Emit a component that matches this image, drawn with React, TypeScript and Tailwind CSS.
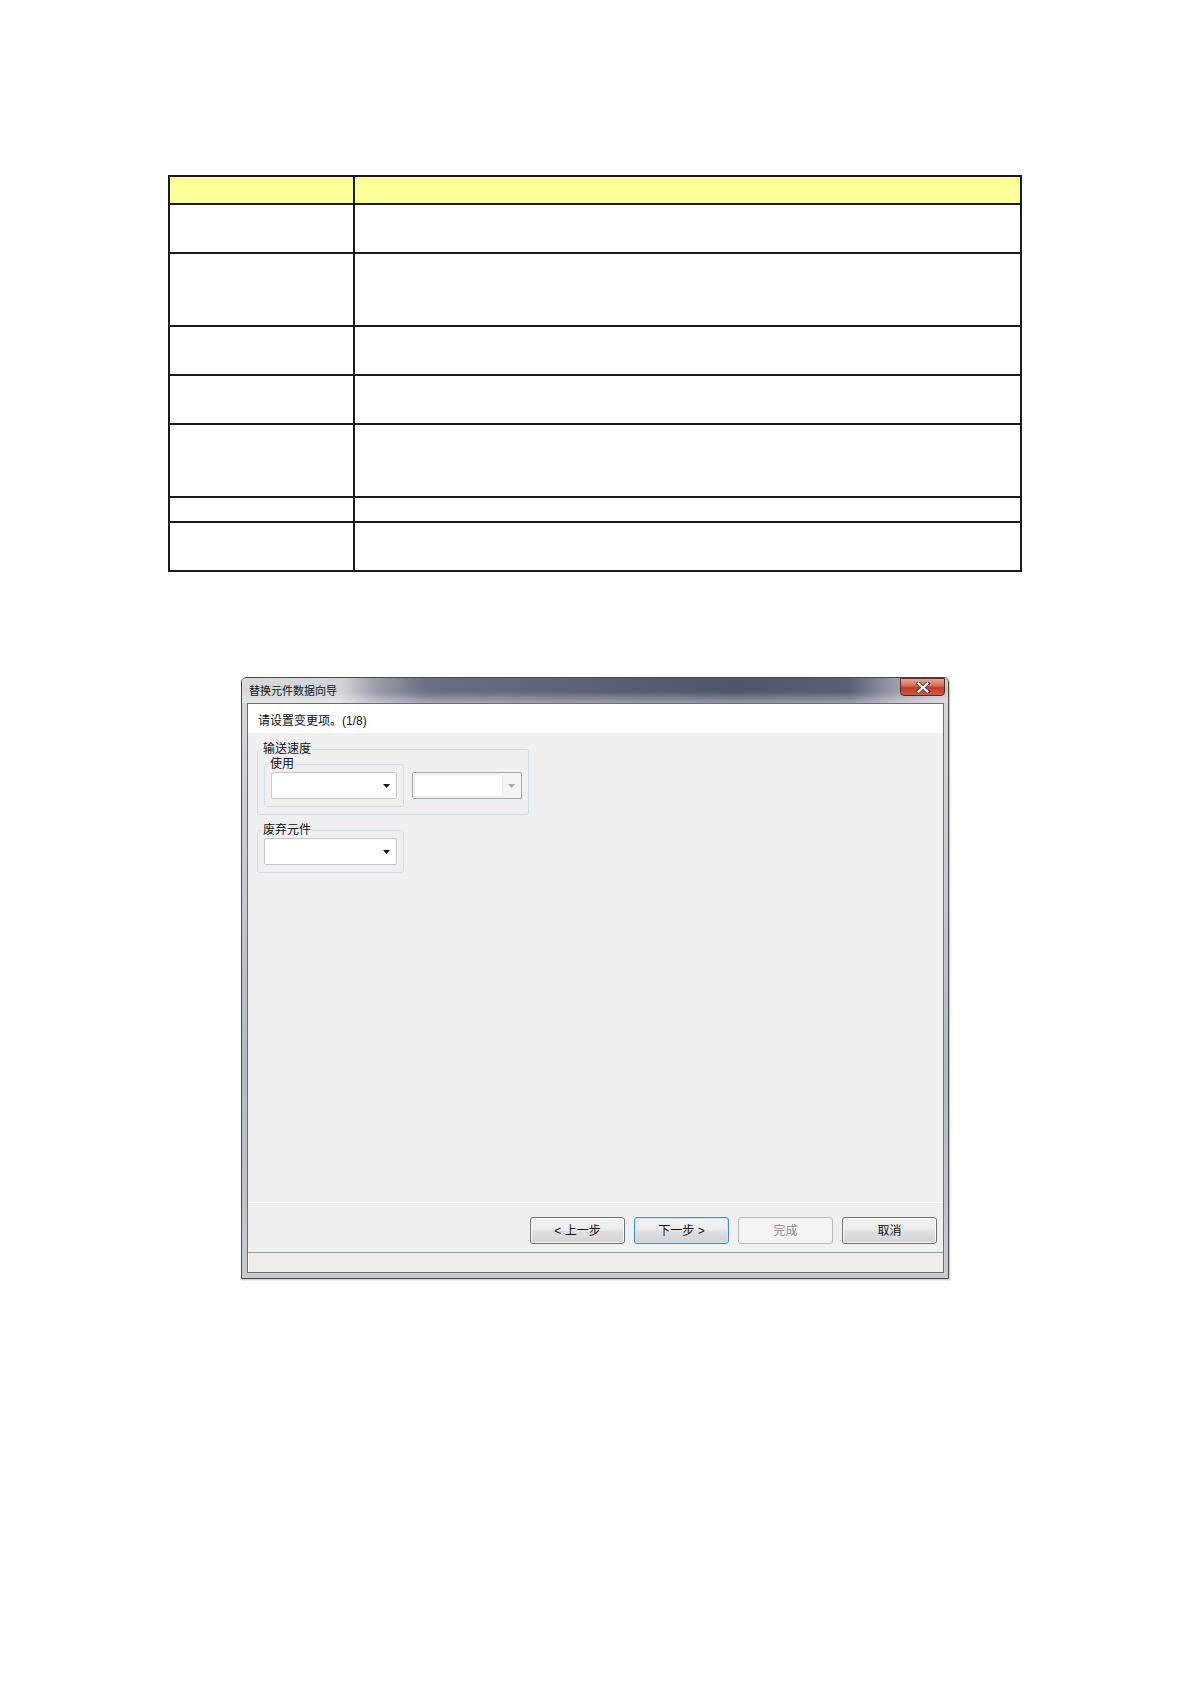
import React from 'react';

const rows = [49, 73, 49, 49, 73, 25, 49];

const rowH: Record<number, string> = {
  25: 'h-[25px]',
  49: 'h-[49px]',
  73: 'h-[73px]',
};

const SpecTable = () => {
  return (
    <div className="ml-[168px] w-[854px] border-l-2 border-t-2 border-[#1a1a1a]">
      <div className="grid grid-cols-[185px_667px]">
        <div className="h-[28px] border-b-2 border-r-2 border-[#1a1a1a] bg-[#ffff99]" />
        <div className="h-[28px] border-b-2 border-r-2 border-[#1a1a1a] bg-[#ffff99]" />
        {rows.map((h, i) => (
          <React.Fragment key={i}>
            <div className={`${rowH[h]} border-b-2 border-r-2 border-[#1a1a1a] bg-white`} />
            <div className={`${rowH[h]} border-b-2 border-r-2 border-[#1a1a1a] bg-white`} />
          </React.Fragment>
        ))}
      </div>
    </div>
  );
};

const DownArrow = ({ color }: { color: string }) => (
  <svg width="7" height="4" viewBox="0 0 7 4">
    <path d="M0 0H7L3.5 4Z" fill={color} />
  </svg>
);

interface ComboProps {
  width: string;
  disabled?: boolean;
}

const Combo = ({ width, disabled }: ComboProps) => {
  if (disabled) {
    return (
      <div className={`${width} flex h-[27px] rounded-[2px] border border-[#a9a9a9] bg-[#f4f4f4] p-[1px]`}>
        <div className="flex-1 border border-[#ececec] bg-white" />
        <div className="flex w-[17px] items-center justify-center">
          <DownArrow color="#a8a8a8" />
        </div>
      </div>
    );
  }
  return (
    <div className={`${width} flex h-[27px] items-center justify-end rounded-[2px] border border-[#c4c6c9] bg-white pr-[6px]`}>
      <DownArrow color="#111" />
    </div>
  );
};

type BtnKind = 'normal' | 'focus' | 'disabled';

const WizardButton = ({ label, kind = 'normal' }: { label: string; kind?: BtnKind }) => {
  const base = 'flex h-[27px] w-[95px] items-center justify-center rounded-[3px] border text-[12px]';
  const styles: Record<BtnKind, string> = {
    normal:
      'border-[#707070] text-[#111] bg-[linear-gradient(to_bottom,#f3f3f3_0%,#ececec_45%,#dfdfdf_55%,#d3d3d3_100%)] shadow-[inset_0_0_0_1px_#fbfbfb]',
    focus:
      'border-[#3c8fd0] text-[#111] bg-[linear-gradient(to_bottom,#f3f3f3_0%,#ececec_45%,#dfdfdf_55%,#d3d3d3_100%)] shadow-[inset_0_0_0_1px_#c6e6fa]',
    disabled: 'border-[#b5b8ba] text-[#8a8a8a] bg-[#f4f4f4]',
  };
  return <div className={`${base} ${styles[kind]}`}>{label}</div>;
};

const Legend = ({ children }: { children: React.ReactNode }) => (
  <legend className="ml-[-2px] px-[1px] text-[12px] leading-[12px] text-[#111]">{children}</legend>
);

const WizardDialog = () => {
  return (
    <div className="ml-[241px] mt-[105px] flex h-[602px] w-[708px] flex-col rounded-t-[5px] border border-[#4a4a4a] bg-[linear-gradient(to_bottom,#d6d7d9_0%,#c7c8cb_35%,#b4b7c0_65%,#c9cacc_100%)] shadow-[1px_1px_2px_rgba(0,0,0,0.25)]">
      <div className="relative flex h-[25px] items-center rounded-t-[4px] bg-[linear-gradient(to_bottom,rgba(255,255,255,0)_55%,rgba(255,255,255,0.4)_100%),linear-gradient(to_right,#d7d8da_0%,#d3d4d7_14%,#9a9eaa_19%,#6a6f82_26%,#5e6376_45%,#4f556a_70%,#596075_86%,#9fa2ac_93%,#c9cacd_100%)] pl-[7px] pt-[2px] text-[11px] text-[#111]">
        替换元件数据向导
        <div className="absolute right-[3px] top-[0px] flex h-[18px] w-[45px] items-center justify-center rounded-b-[4px] border border-[#5a2a22] bg-[linear-gradient(to_bottom,#e6a796_0%,#d66f58_40%,#c13e26_55%,#d0583f_100%)]">
          <svg width="14" height="11" viewBox="0 0 14 11">
            <path d="M2.5 1.5L11.5 9.5M11.5 1.5L2.5 9.5" stroke="#4a4a4a" strokeWidth="4" strokeLinecap="square" />
            <path d="M2.5 1.5L11.5 9.5M11.5 1.5L2.5 9.5" stroke="#ffffff" strokeWidth="2.2" strokeLinecap="square" />
          </svg>
        </div>
      </div>
      <div className="flex flex-1 flex-col pb-[5px] pl-[5px] pr-[4px]">
        <div className="flex flex-1 flex-col border border-[#6d6d6d] bg-[#f0f0f0]">
          <div className="flex h-[29px] items-center bg-white pl-[10px] pt-[5px] text-[12px] text-[#111]">
            请设置变更项。(1/8)
          </div>
          <div className="h-[469px] pl-[9px] pt-[10px] text-[12px]">
            <fieldset className="w-[272px] rounded-[3px] border border-[#d3dde3] pb-[7px] pl-[6px]">
              <Legend>输送速度</Legend>
              <div className="flex items-start">
                <fieldset className="mt-[3px] w-[140px] rounded-[3px] border border-[#d3dde3] pb-[7px] pl-[6px] pt-[2px]">
                  <Legend>使用</Legend>
                  <Combo width="w-[126px]" />
                </fieldset>
                <div className="ml-[8px] mt-[17px]">
                  <Combo width="w-[110px]" disabled />
                </div>
              </div>
            </fieldset>
            <fieldset className="mt-[9px] w-[147px] rounded-[3px] border border-[#d3dde3] pb-[7px] pl-[6px] pt-[2px]">
              <Legend>废弃元件</Legend>
              <Combo width="w-[133px]" />
            </fieldset>
          </div>
          <div className="flex h-[50px] items-start justify-end gap-[9px] border-t border-white pr-[6px] pt-[14px]">
            <WizardButton label="< 上一步" />
            <WizardButton label="下一步 >" kind="focus" />
            <WizardButton label="完成" kind="disabled" />
            <WizardButton label="取消" />
          </div>
          <div className="h-[20px] border-t border-[#9c9c9c] bg-[#f0eceb] shadow-[inset_1px_0_0_#ffffff]" />
        </div>
      </div>
    </div>
  );
};

export default function App() {
  return (
    <div className="h-[1684px] w-[1190px] overflow-hidden bg-white pt-[175px] font-['Liberation_Sans','Noto_Sans_CJK_SC',sans-serif]">
      <SpecTable />
      <WizardDialog />
    </div>
  );
}
